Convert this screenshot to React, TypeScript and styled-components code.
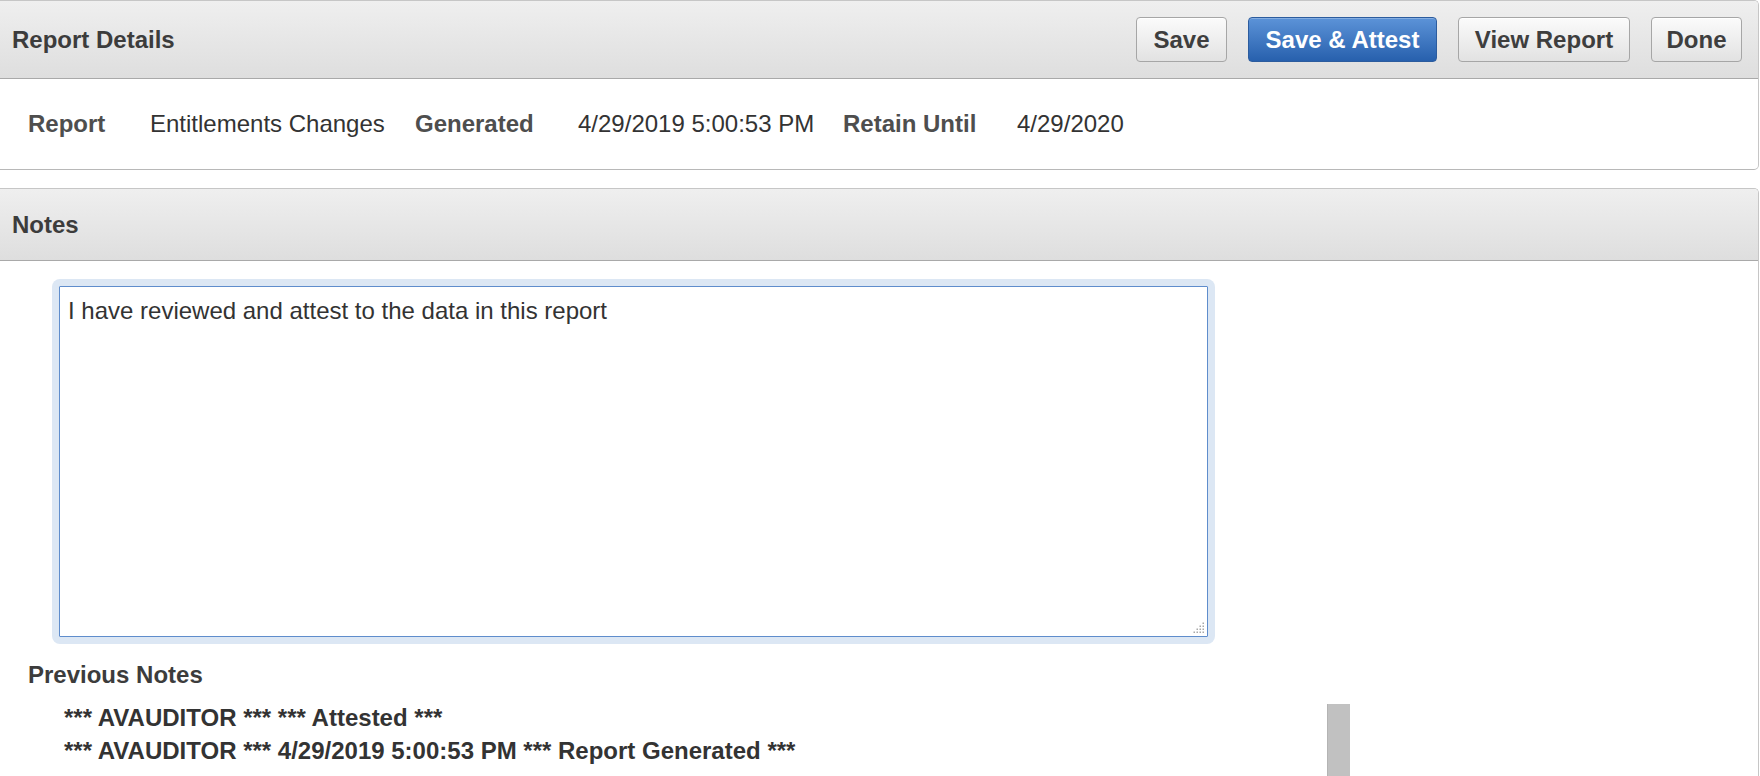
import React, { useState } from 'react'
import styled, { createGlobalStyle } from 'styled-components'

const GlobalStyle = createGlobalStyle`
  html, body {
    margin: 0;
    padding: 0;
    height: 100%;
    overflow: hidden;
    background: #ffffff;
    font-family: "Liberation Sans", Arial, sans-serif;
  }
`

const Page = styled.div`
  width: 1759px;
  height: 776px;
  display: flex;
  flex-direction: column;
  gap: 18px;
`

const Panel = styled.section<{ $open?: boolean }>`
  display: flex;
  flex-direction: column;
  border: 1px solid #c6c6c6;
  border-left: none;
  border-bottom: ${(p) => (p.$open ? 'none' : '1px solid #b8b8b8')};
  border-radius: ${(p) => (p.$open ? '0 5px 0 0' : '0 5px 5px 0')};
  background: #ffffff;
  overflow: hidden;
  flex: ${(p) => (p.$open ? '1 1 auto' : 'none')};
`

const PanelHeader = styled.div<{ $h: number }>`
  flex-shrink: 0;
  height: ${(p) => p.$h}px;
  display: flex;
  align-items: center;
  justify-content: space-between;
  padding: 0 16px 0 12px;
  background: linear-gradient(#efefef, #dedede);
  border-bottom: 1px solid #a9a9a9;
`

const PanelTitle = styled.h2`
  margin: 0;
  font-size: 24px;
  font-weight: bold;
  color: #3c3c3c;
`

const ButtonBar = styled.div`
  display: flex;
  gap: 21px;
  align-items: center;
`

const Button = styled.button<{ $w: number; $primary?: boolean }>`
  width: ${(p) => p.$w}px;
  height: 45px;
  padding: 0;
  border-radius: 4px;
  font-family: "Liberation Sans", Arial, sans-serif;
  font-size: 24px;
  font-weight: bold;
  cursor: pointer;
  color: ${(p) => (p.$primary ? '#ffffff' : '#3e3e3e')};
  border: 1px solid ${(p) => (p.$primary ? '#2c5c9e' : '#a6a6a6')};
  background: ${(p) =>
    p.$primary ? 'linear-gradient(#5c93d8, #2760ad)' : 'linear-gradient(#fbfbfb, #e2e2e2)'};
  box-shadow: ${(p) =>
    p.$primary ? 'inset 0 1px 0 rgba(255,255,255,0.25)' : 'inset 0 1px 0 #ffffff'};
`

const DetailRow = styled.div`
  height: 90px;
  display: flex;
  align-items: center;
  padding-left: 28px;
`

const Cell = styled.div<{ $w?: number; $label?: boolean }>`
  width: ${(p) => (p.$w ? `${p.$w}px` : 'auto')};
  font-size: 24px;
  font-weight: ${(p) => (p.$label ? 'bold' : 'normal')};
  color: ${(p) => (p.$label ? '#4e4e4e' : '#333333')};
  white-space: nowrap;
`

const NotesBody = styled.div`
  flex-shrink: 0;
  display: flex;
  flex-direction: column;
  padding: 18px 0 0 0;
`

const GlowWrap = styled.div`
  position: relative;
  width: 1163px;
  margin-left: 52px;
  padding: 7px;
  box-sizing: border-box;
  border-radius: 8px;
  background: #dce7f4;
`

const NoteArea = styled.textarea`
  display: block;
  width: 100%;
  height: 351px;
  box-sizing: border-box;
  margin: 0;
  padding: 10px 8px;
  border: 1px solid #5f8dcc;
  border-radius: 1px;
  font-family: "Liberation Sans", Arial, sans-serif;
  font-size: 24px;
  line-height: 28px;
  color: #333333;
  background: #ffffff;
  resize: none;
  outline: none;
`

const Grip = styled.svg`
  position: absolute;
  right: 10px;
  bottom: 10px;
`

const SubTitle = styled.h3`
  margin: 17px 0 0 28px;
  font-size: 24px;
  line-height: 28px;
  font-weight: bold;
  color: #3c3c3c;
`

const NotesList = styled.div`
  display: flex;
  width: 1322px;
  margin: 12px 0 0 28px;
  height: 90px;
  overflow: hidden;
`

const NoteLines = styled.div`
  flex: 1;
  padding-left: 36px;
`

const NoteLine = styled.div`
  font-size: 24px;
  line-height: 33px;
  font-weight: bold;
  color: #333333;
  white-space: nowrap;
`

const ScrollTrack = styled.div`
  width: 23px;
  padding-top: 3px;
`

const ScrollThumb = styled.div`
  height: 120px;
  background: #c1c1c1;
  border-left: 1px solid #b4b4b4;
  box-sizing: border-box;
`

const gripDots: [number, number][] = []
for (let r = 0; r < 4; r++) {
  for (let c = 0; c < 4; c++) {
    if (r + c >= 3) gripDots.push([c * 3 + 1, r * 3 + 1])
  }
}

const App: React.FC = () => {
  const [note, setNote] = useState('I have reviewed and attest to the data in this report')

  return (
    <>
      <GlobalStyle />
      <Page>
        <Panel>
          <PanelHeader $h={77}>
            <PanelTitle>Report Details</PanelTitle>
            <ButtonBar>
              <Button $w={91}>Save</Button>
              <Button $w={189} $primary>
                Save &amp; Attest
              </Button>
              <Button $w={172}>View Report</Button>
              <Button $w={91}>Done</Button>
            </ButtonBar>
          </PanelHeader>
          <DetailRow>
            <Cell $w={122} $label>Report</Cell>
            <Cell $w={265}>Entitlements Changes</Cell>
            <Cell $w={163} $label>Generated</Cell>
            <Cell $w={265}>4/29/2019 5:00:53 PM</Cell>
            <Cell $w={174} $label>Retain Until</Cell>
            <Cell>4/29/2020</Cell>
          </DetailRow>
        </Panel>

        <Panel $open>
          <PanelHeader $h={71}>
            <PanelTitle>Notes</PanelTitle>
          </PanelHeader>
          <NotesBody>
            <GlowWrap>
              <NoteArea value={note} onChange={(e) => setNote(e.target.value)} />
              <Grip width="12" height="12" viewBox="0 0 12 12">
                {gripDots.map(([x, y]) => (
                  <rect key={`${x}-${y}`} x={x - 0.5} y={y - 0.5} width="1.5" height="1.5" fill="#a8a8a8" />
                ))}
              </Grip>
            </GlowWrap>
            <SubTitle>Previous Notes</SubTitle>
            <NotesList>
              <NoteLines>
                <NoteLine>*** AVAUDITOR *** *** Attested ***</NoteLine>
                <NoteLine>*** AVAUDITOR *** 4/29/2019 5:00:53 PM *** Report Generated ***</NoteLine>
              </NoteLines>
              <ScrollTrack>
                <ScrollThumb />
              </ScrollTrack>
            </NotesList>
          </NotesBody>
        </Panel>
      </Page>
    </>
  )
}

export default App
